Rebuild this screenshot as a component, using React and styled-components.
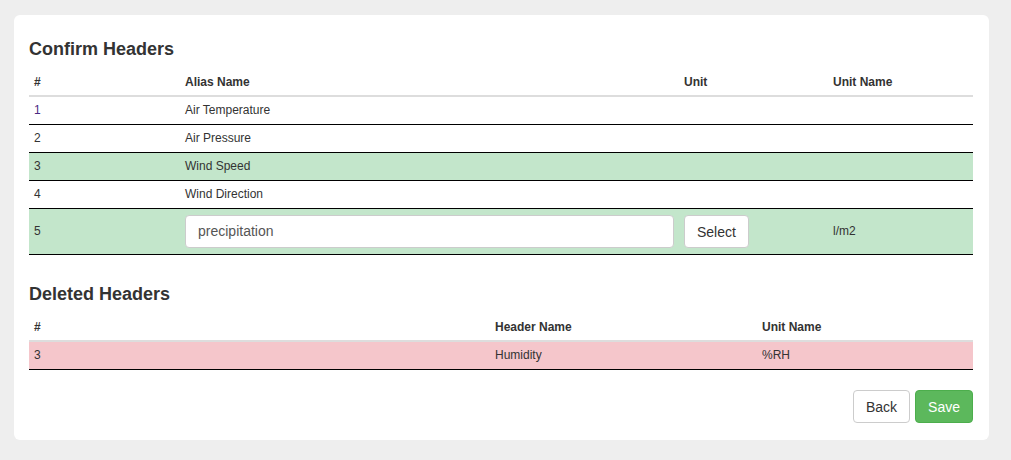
import React from "react";
import styled, { createGlobalStyle } from "styled-components";

const Global = createGlobalStyle`
  html, body { margin: 0; padding: 0; background: #eeeeee; }
  body { font-family: "Liberation Sans", Arial, sans-serif; color: #333; }
  * { box-sizing: border-box; }
`;

const Page = styled.div`
  padding: 15px 22px 20px 14px;
`;

const Card = styled.div`
  background: #fff;
  border-radius: 6px;
  padding: 25px 16px 16px 15px;
  width: 975px;
`;

const Title = styled.h3`
  font-size: 18px;
  font-weight: 700;
  line-height: 1.1;
  margin: 0 0 8px;
  color: #333;
`;

const Table = styled.table`
  width: 100%;
  border-collapse: collapse;
  font-size: 12px;
  line-height: 17px;
  margin-bottom: ${(p) => p.$mb || 0}px;
`;

const Th = styled.th`
  text-align: left;
  font-weight: 700;
  padding: 6px 5px 4px;
  border-bottom: 2px solid #ddd;
  width: ${(p) => p.$w || "auto"};
`;

const Tr = styled.tr`
  background: ${(p) =>
    p.$tone === "success" ? "#c3e6cb" : p.$tone === "danger" ? "#f5c6cb" : "#fff"};
  border-bottom: 1px solid #000;
`;

const Td = styled.td`
  padding: 5px;
  vertical-align: middle;
  color: ${(p) => p.$color || "#333"};
`;

const EditTd = styled(Td)`
  padding: 6px 5px;
`;

const Input = styled.input`
  display: block;
  width: 100%;
  height: 33px;
  padding: 6px 12px;
  font-family: inherit;
  font-size: 14px;
  color: #555;
  border: 1px solid #ccc;
  border-radius: 4px;
  background: #fff;
  outline: none;
`;

const Button = styled.button`
  font-family: inherit;
  font-size: 14px;
  line-height: 20px;
  padding: 6px 12px;
  height: 33px;
  border-radius: 4px;
  border: 1px solid ${(p) => (p.$primary ? "#4cae4c" : "#ccc")};
  background: ${(p) => (p.$primary ? "#5cb85c" : "#fff")};
  color: ${(p) => (p.$primary ? "#fff" : "#333")};
  cursor: pointer;
`;

const Footer = styled.div`
  display: flex;
  justify-content: flex-end;
  gap: 5px;
  padding-bottom: 1px;
`;

const confirmRows = [
  { n: "1", alias: "Air Temperature", link: true },
  { n: "2", alias: "Air Pressure" },
  { n: "3", alias: "Wind Speed", tone: "success" },
  { n: "4", alias: "Wind Direction" },
];

export default function App() {
  return (
    <>
      <Global />
      <Page>
        <Card>
          <Title>Confirm Headers</Title>
          <Table $mb={30}>
            <thead>
              <tr>
                <Th $w="151px">#</Th>
                <Th $w="499px">Alias Name</Th>
                <Th $w="149px">Unit</Th>
                <Th>Unit Name</Th>
              </tr>
            </thead>
            <tbody>
              {confirmRows.map((r) => (
                <Tr key={r.n} $tone={r.tone}>
                  <Td $color={r.link ? "#4a2a82" : undefined}>{r.n}</Td>
                  <Td>{r.alias}</Td>
                  <Td />
                  <Td />
                </Tr>
              ))}
              <Tr $tone="success">
                <EditTd>5</EditTd>
                <EditTd>
                  <Input defaultValue="precipitation" />
                </EditTd>
                <EditTd>
                  <Button>Select</Button>
                </EditTd>
                <EditTd>l/m2</EditTd>
              </Tr>
            </tbody>
          </Table>

          <Title>Deleted Headers</Title>
          <Table $mb={20}>
            <thead>
              <tr>
                <Th $w="461px">#</Th>
                <Th $w="267px">Header Name</Th>
                <Th>Unit Name</Th>
              </tr>
            </thead>
            <tbody>
              <Tr $tone="danger">
                <Td>3</Td>
                <Td>Humidity</Td>
                <Td>%RH</Td>
              </Tr>
            </tbody>
          </Table>

          <Footer>
            <Button>Back</Button>
            <Button $primary>Save</Button>
          </Footer>
        </Card>
      </Page>
    </>
  );
}
